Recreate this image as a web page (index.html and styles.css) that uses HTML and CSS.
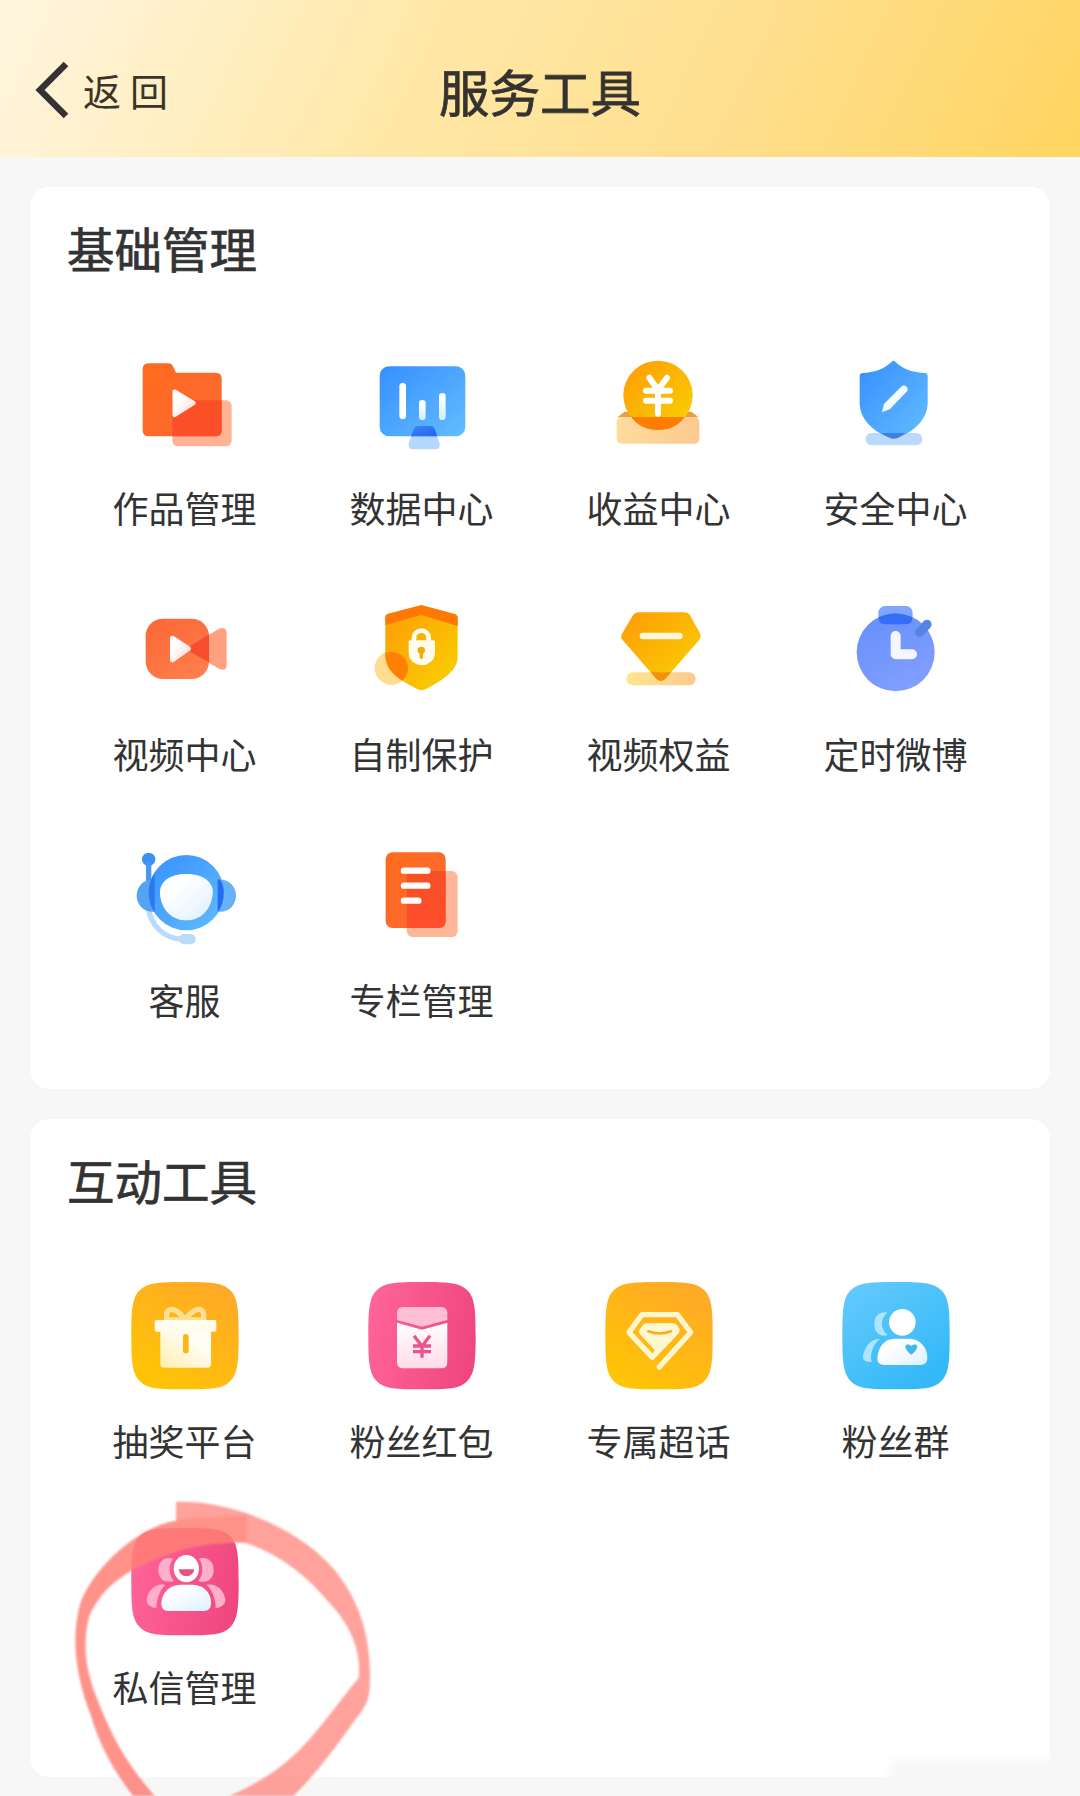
FILE: index.html
```html
<!DOCTYPE html>
<html lang="zh-CN">
<head>
<meta charset="UTF-8">
<meta name="viewport" content="width=device-width, initial-scale=1.0">
<title>服务工具</title>
<link rel="stylesheet" href="styles.css">
</head>
<body>

<!-- shared gradients -->
<svg class="defs" width="0" height="0">
  <defs>
    <linearGradient id="orange" x1="0" y1="0" x2="1" y2="1"><stop offset="0" stop-color="#ff6a1c"/><stop offset="1" stop-color="#fb6a35"/></linearGradient>
    <linearGradient id="coral" x1="0" y1="0" x2="0.6" y2="1"><stop offset="0" stop-color="#fb6634"/><stop offset="1" stop-color="#ff7c4c"/></linearGradient>
    <linearGradient id="red" x1="0.5" y1="0" x2="0.5" y2="1"><stop offset="0" stop-color="#f84f25"/><stop offset="1" stop-color="#ff4f2c"/></linearGradient>
    <linearGradient id="blue" x1="0" y1="0" x2="1" y2="1"><stop offset="0" stop-color="#3590ff"/><stop offset="1" stop-color="#64bcfe"/></linearGradient>
    <linearGradient id="deep" x1="0" y1="0" x2="1" y2="1"><stop offset="0" stop-color="#3a86f4"/><stop offset="1" stop-color="#2464ef"/></linearGradient>
    <linearGradient id="gold" x1="0" y1="0" x2="1" y2="1"><stop offset="0" stop-color="#ff9a08"/><stop offset="1" stop-color="#f8d300"/></linearGradient>
    <linearGradient id="peach" x1="0" y1="0" x2="1" y2="0"><stop offset="0" stop-color="#fedc9c"/><stop offset="1" stop-color="#fdc890"/></linearGradient>
    <linearGradient id="lemon" x1="0" y1="0" x2="1" y2="0"><stop offset="0" stop-color="#ffe78c"/><stop offset="1" stop-color="#fdc890"/></linearGradient>
    <linearGradient id="indigo" x1="0.2" y1="0" x2="0.7" y2="1"><stop offset="0" stop-color="#6690f9"/><stop offset="1" stop-color="#829fff"/></linearGradient>
    <linearGradient id="fadeRed" x1="0" y1="0" x2="1" y2="1"><stop offset="0.3" stop-color="#fff"/><stop offset="1" stop-color="#ffd9d2"/></linearGradient>
    <linearGradient id="fadeBlue" x1="0" y1="0" x2="1" y2="1"><stop offset="0.3" stop-color="#fff"/><stop offset="1" stop-color="#dcf0fe"/></linearGradient>
    <linearGradient id="bar" x1="0" y1="0" x2="0" y2="1"><stop offset="0.2" stop-color="#fff"/><stop offset="1" stop-color="#c9f0ff"/></linearGradient>
    <linearGradient id="tileGold" x1="0.8" y1="0" x2="0.2" y2="1"><stop offset="0" stop-color="#ffa928"/><stop offset="1" stop-color="#ffc504"/></linearGradient>
    <linearGradient id="tilePink" x1="0" y1="0.4" x2="1" y2="0.6"><stop offset="0" stop-color="#ff6398"/><stop offset="1" stop-color="#ee477e"/></linearGradient>
    <linearGradient id="tileBlue" x1="0" y1="0" x2="0.7" y2="1"><stop offset="0" stop-color="#66cbfd"/><stop offset="1" stop-color="#33b8f8"/></linearGradient>
    <linearGradient id="cream" x1="0" y1="1" x2="1" y2="0"><stop offset="0" stop-color="#ffeeb0"/><stop offset="0.7" stop-color="#fffdf4"/></linearGradient>
    <linearGradient id="blush" x1="0" y1="0" x2="0" y2="1"><stop offset="0" stop-color="#fff"/><stop offset="1" stop-color="#ffdbe7"/></linearGradient>
    <path id="tile" d="M180 12C258 12 293 14 316 37C339 60 341 97 341 173C341 249 339 285 316 309C293 333 258 334 180 334C102 334 67 333 44 309C21 285 19 249 19 173C19 97 21 60 44 37C67 14 102 12 180 12Z"/>
  </defs>
</svg>

<header class="header">
  <a class="back">
    <svg class="back-arrow" viewBox="0 0 34 58"><path d="M31 3L5 29L31 55"/></svg>
    <span>返回</span>
  </a>
  <h1>服务工具</h1>
</header>

<main class="content">
  <section class="card">
    <h2>基础管理</h2>
    <div class="grid">
      <div class="item">
        <svg class="icon" viewBox="76 11 360 360">
          <rect x="218" y="180" width="178" height="138" rx="17" fill="#ffb294"/>
          <path d="M147 69H207Q216 69 220 78L229 97H348Q366 97 366 115V270Q366 288 348 288H147Q129 288 129 270V87Q129 69 147 69Z" fill="url(#orange)"/>
          <path d="M218 197Q218 180 235 180H366V270Q366 288 348 288H218Z" fill="url(#red)"/>
          <path d="M225 154L282 188L225 224Z" fill="url(#fadeRed)" stroke="url(#fadeRed)" stroke-width="13" stroke-linejoin="round"/>
        </svg>
        <span>作品管理</span>
      </div>
      <div class="item">
        <svg class="icon" viewBox="787 11 360 360">
          <path d="M941 270Q945 257 957 257H993Q1003 257 1007 270L1020 310Q1022 327 1007 327H941Q925 327 927 310Z" fill="#b5d8ff"/>
          <rect x="840" y="78" width="257" height="210" rx="28" fill="url(#blue)"/>
          <path d="M941 270Q945 257 957 257H993Q1003 257 1007 270L1013 288H934Z" fill="url(#deep)"/>
          <rect x="899" y="128" width="20" height="108" rx="10" fill="#fff"/>
          <rect x="958" y="179" width="20" height="60" rx="10" fill="url(#bar)"/>
          <rect x="1018" y="158" width="20" height="81" rx="10" fill="url(#bar)"/>
        </svg>
        <span>数据中心</span>
      </div>
      <div class="item">
        <svg class="icon" viewBox="58 11 360 360">
          <path d="M113 231L135 214H335L357 231Z" fill="#e99e42"/>
          <rect x="111" y="230" width="248" height="80" rx="15" fill="url(#peach)"/>
          <circle cx="235" cy="165" r="104" fill="url(#gold)"/>
          <path d="M155 230H315C297 256 268 269 235 269C202 269 173 256 155 230Z" fill="#ff7d05"/>
          <path d="M209 112L235 149L262 112M199 151H271M199 181H271M235 149V220" fill="none" stroke="#fff" stroke-width="18" stroke-linecap="round"/>
        </svg>
        <span>收益中心</span>
      </div>
      <div class="item">
        <svg class="icon" viewBox="769 11 360 360">
          <rect x="858" y="278" width="170" height="37" rx="18" fill="#bbd9fd"/>
          <path d="M936 64Q941 59 947 64C968 86 1001 96 1036 98Q1044 99 1044 106V187C1044 230 1012 270 955 292Q941 297 930 292C872 270 840 230 840 187V106Q840 99 848 98C883 96 914 86 936 64Z" fill="url(#blue)"/>
          <path d="M905 278H978Q966 287 955 292Q941 297 930 292Q917 287 905 278Z" fill="#3c82e5"/>
          <path d="M966 138Q973 132 981 139Q987 147 981 154L931 206L907 216L913 191Z" fill="url(#fadeBlue)"/>
        </svg>
        <span>安全中心</span>
      </div>

      <div class="item">
        <svg class="icon" viewBox="76 29 360 360">
          <path d="M272 197L358 145Q381 138 381 160V253Q381 272 361 267L272 215Z" fill="#ffa07f"/>
          <rect x="138" y="115" width="190" height="181" rx="52" fill="url(#coral)"/>
          <path d="M272 197L328 162V246L272 215Z" fill="#f84c2e"/>
          <path d="M218 173L267 205L218 239Z" fill="url(#fadeRed)" stroke="url(#fadeRed)" stroke-width="14" stroke-linejoin="round"/>
        </svg>
        <span>视频中心</span>
      </div>
      <div class="item">
        <svg class="icon" viewBox="786 29 360 360">
          <circle cx="874" cy="263" r="50" fill="#ffdc91"/>
          <path d="M865 100L957 76Q964 73 971 76L1064 101Q1073 104 1073 112V230C1073 266 1040 294 978 326Q964 333 951 326C888 294 856 266 856 230V110Q856 103 865 100Z" fill="url(#gold)"/>
          <path d="M865 100L957 76Q964 73 971 76L1064 101Q1073 104 1073 112V137L964 104L856 134V110Q856 103 865 100Z" fill="#ff7806"/>
          <path d="M856 217C890 206 924 230 924 263Q924 285 906 301C875 280 856 257 856 217Z" fill="#ff8004"/>
          <path d="M942 184V171A22 20 0 0 1 986 171V184" fill="none" stroke="#fffdf0" stroke-width="14"/>
          <path d="M926 184Q926 180 931 180H1000Q1005 180 1005 184V217A39 37 0 0 1 926 217Z" fill="#fffbed"/>
          <circle cx="964" cy="210" r="11" fill="#f4aa09"/><rect x="959" y="212" width="10" height="24" rx="5" fill="#f4aa09"/>
        </svg>
        <span>自制保护</span>
      </div>
      <div class="item">
        <svg class="icon" viewBox="58 29 360 360">
          <rect x="140" y="276" width="208" height="39" rx="19" fill="url(#lemon)"/>
          <path d="M178 96H314Q325 96 331 105L361 159Q366 168 359 178L260 292Q244 312 227 292L129 179Q121 170 128 159L160 105Q166 96 178 96Z" fill="url(#gold)"/>
          <path d="M213 276H274L260 292Q244 312 227 292Z" fill="#f39109"/>
          <rect x="180" y="157" width="129" height="20" rx="10" fill="#fff6dc"/>
        </svg>
        <span>视频权益</span>
      </div>
      <div class="item">
        <svg class="icon" viewBox="769 29 360 360">
          <rect x="896" y="77" width="103" height="55" rx="20" fill="#7ea6fd"/>
          <circle cx="948" cy="216" r="117" fill="url(#indigo)"/>
          <path d="M897 111Q948 88 998 111Q999 132 979 132H916Q896 132 897 111Z" fill="#356df6"/>
          <path d="M1020 156L1042 132" stroke="#5484e6" stroke-width="28" stroke-linecap="round"/>
          <path d="M948 167V222H997" fill="none" stroke="#f4f7ff" stroke-width="30" stroke-linecap="round" stroke-linejoin="round"/>
        </svg>
        <span>定时微博</span>
      </div>

      <div class="item">
        <svg class="icon" viewBox="76 17 360 360">
          <path d="M147 235C153 288 197 325 247 327" fill="none" stroke="#b9dafb" stroke-width="16"/>
          <rect x="238" y="311" width="50" height="31" rx="15" fill="#b9dafb"/>
          <circle cx="147" cy="87" r="20" fill="#3a91f4"/>
          <path d="M147 95V165" stroke="#4798f4" stroke-width="16"/>
          <path d="M165 148V244C133 247 111 223 111 196C111 169 133 145 165 148Z" fill="#54a3f5"/>
          <path d="M354 148C387 145 409 169 409 196C409 223 387 248 354 244Z" fill="#65b1fa"/>
          <circle cx="260" cy="187" r="113" fill="url(#blue)"/>
          <path d="M165 126V248C141 209 141 165 165 126Z" fill="#2b78ef"/>
          <path d="M354 147C363 144 369 161 372 178C374 205 366 231 354 245Z" fill="#256cf1"/>
          <path d="M181 193C177 153 213 131 260 131C307 131 344 153 339 193C333 240 302 270 260 270C218 270 186 240 181 193Z" fill="url(#fadeBlue)"/>
        </svg>
        <span>客服</span>
      </div>
      <div class="item">
        <svg class="icon" viewBox="787 17 360 360">
          <rect x="921" y="122" width="153" height="198" rx="19" fill="#ffb799"/>
          <rect x="858" y="66" width="180" height="227" rx="20" fill="url(#orange)"/>
          <path d="M921 141Q921 122 940 122H1038V273Q1038 293 1018 293H921Z" fill="url(#red)"/>
          <path d="M913 121H983M913 166H983M913 211H956" stroke="#fff" stroke-width="19" stroke-linecap="round"/>
        </svg>
        <span>专栏管理</span>
      </div>
    </div>
  </section>

  <section class="card card-tiles">
    <h2>互动工具</h2>
    <div class="grid">
      <div class="item">
        <svg class="icon" viewBox="0 0 360 360">
          <use href="#tile" fill="url(#tileGold)"/>
          <path d="M180 126C160 94 132 84 125 106V126H236V106C229 84 201 94 180 126Z" fill="none" stroke="#ffdf91" stroke-width="16" stroke-linejoin="round"/>
          <path d="M106 158H258V257Q258 269 246 269H118Q106 269 106 257Z" fill="url(#cream)"/>
          <rect x="89" y="126" width="185" height="35" rx="5" fill="#fffbed"/>
          <rect x="174" y="168" width="17" height="58" rx="8" fill="#ffb515"/>
        </svg>
        <span>抽奖平台</span>
      </div>
      <div class="item">
        <svg class="icon" viewBox="0 0 360 360">
          <use href="#tile" fill="url(#tilePink)"/>
          <path d="M105 105Q105 87 123 87H238Q256 87 256 105V126L180 146L105 126Z" fill="#ffbed3"/>
          <path d="M105 134L180 155L256 134V252Q256 271 238 271H123Q105 271 105 252Z" fill="url(#blush)"/>
          <path d="M156 173L180 205L204 173M153 204H207M153 221H207M180 203V239" fill="none" stroke="#e9568b" stroke-width="10"/>
        </svg>
        <span>粉丝红包</span>
      </div>
      <div class="item">
        <svg class="icon" viewBox="0 0 360 360">
          <use href="#tile" fill="url(#tileGold)"/>
          <path d="M160 238L90 163L129 110H235L275 163L181 267" fill="none" stroke="#fff6cf" stroke-width="16" stroke-linejoin="round" stroke-linecap="round"/>
          <path d="M141 136H223Q231 136 236 143L242 153Q243 162 237 169L166 243L155 233L167 217L123 169Q117 162 123 153L130 143Q134 136 141 136Z" fill="#fff7cf"/>
          <path d="M148 160Q182 173 216 160" fill="none" stroke="#f5ae20" stroke-width="8" stroke-linecap="round"/>
        </svg>
        <span>专属超话</span>
      </div>
      <div class="item">
        <svg class="icon" viewBox="0 0 360 360">
          <use href="#tile" fill="url(#tileBlue)"/>
          <path d="M154 104C131 123 133 153 155 171C132 178 115 163 115 137C115 112 134 99 154 104Z" fill="#afe4ff"/>
          <path d="M132 183C112 198 100 227 107 252C88 252 80 248 81 234C85 206 107 180 132 183Z" fill="#afe4ff"/>
          <circle cx="199" cy="133" r="40" fill="#fff"/>
          <path d="M176 182H219C253 182 275 210 274 240Q274 261 253 261H145Q123 261 124 240C127 209 143 182 176 182Z" fill="url(#fadeBlue)"/>
          <path d="M226 230C197 208 208 191 226 204C244 191 255 208 226 230Z" fill="#41b6ef"/>
        </svg>
        <span>粉丝群</span>
      </div>

      <div class="item">
        <svg class="icon" viewBox="0 0 360 360">
          <use href="#tile" fill="url(#tilePink)"/>
          <path id="wing" d="M144 104C130 122 131 151 146 171C119 180 100 164 100 138C100 111 120 97 144 104ZM121 182C103 200 94 227 94 253C76 250 64 242 65 226C70 199 89 178 121 182Z" fill="#ffafc9"/>
          <use href="#wing" transform="translate(366 0) scale(-1 1)"/>
          <ellipse cx="184" cy="134" rx="38" ry="41" fill="#fff"/>
          <path d="M161 136H208Q205 156 184 157Q164 156 161 136Z" fill="#e8527f"/>
          <path d="M167 182H203C237 182 259 207 258 237Q258 261 236 261H132Q109 261 109 239C110 207 133 182 167 182Z" fill="url(#fadeBlue)"/>
        </svg>
        <span>私信管理</span>
      </div>
    </div>
  </section>
</main>

<!-- marker circle drawn over the last item -->
<svg class="marker" viewBox="0 0 1020 948">
  <path class="stroke-light" d="M378 66C450 63 522 78 590 100C710 142 820 213 882 308C935 390 966 485 959 625C957 665 940 690 915 720C845 820 785 895 730 948H535C620 915 693 864 748 811C812 744 862 672 926 593C935 510 899 431 833 363C765 282 677 213 560 181L378 143Z"/>
  <path d="M555 188C440 191 352 215 242 274C180 312 144 350 118 408C98 485 103 560 141 655C181 760 223 842 314 948H249C193 875 150 800 122 705C77 590 61 470 92 367C128 268 260 140 383 121C450 106 530 112 590 105L590 188Z"/>
</svg>
<div class="smudge"></div>

</body>
</html>
```
FILE: styles.css
```css
* {
  box-sizing: border-box;
}
body {
  position: relative;
  height: 1796px;
  margin: 0;
  overflow: hidden;
  background-color: #f7f7f7;
  color: #333;
  font-family: "Noto Sans CJK SC", sans-serif;
}
h1, h2 {
  margin: 0;
  font-weight: 400;
}
.defs {
  position: absolute;
}
.header {
  display: grid;
  grid-template-columns: 1fr auto 1fr;
  align-items: center;
  height: 157px;
  padding: 22px 35px 0;
  background: linear-gradient(115deg, #fff6e0 0%, #ffe8a8 38%, #ffdf8e 68%, #ffd460 100%);
}
.header h1 {
  font-size: 50.5px;
  line-height: 70px;
  -webkit-text-stroke: 0.8px #38342a;
}
.back {
  display: flex;
  align-items: center;
  gap: 14px;
  color: #3b3528;
  font-size: 38px;
  line-height: 50px;
  letter-spacing: 9px;
}
.back-arrow {
  width: 34px;
  height: 58px;
  fill: none;
  stroke: #333;
  stroke-width: 6.5;
}
.content {
  display: flex;
  flex-direction: column;
  gap: 30px;
  padding: 30px;
}
.card {
  height: 902px;
  padding: 30px 37px 0;
  background-color: #fff;
  border-radius: 20px;
}
.card h2 {
  font-size: 47.5px;
  line-height: 62px;
  -webkit-text-stroke: 0.7px #333;
}
.grid {
  display: grid;
  grid-template-columns: repeat(4, 237px);
  grid-auto-rows: 246px;
  margin: 65px -1px 0;
}
.card-tiles {
  height: 658px;
}
.card-tiles .grid {
  margin-top: 67px;
}
.item {
  display: flex;
  flex-direction: column;
  align-items: center;
  gap: 18px;
  font-size: 36px;
  line-height: 50px;
}
.card-tiles .item {
  gap: 17px;
}
.icon {
  width: 120px;
  height: 120px;
}
.marker {
  position: absolute;
  top: 1480px;
  left: 50px;
  width: 340px;
  height: 316px;
  fill: #ff7f75;
  opacity: 0.85;
  filter: blur(1.2px);
}
.stroke-light {
  fill-opacity: 0.85;
}
.smudge {
  position: absolute;
  right: 10px;
  bottom: 12px;
  width: 180px;
  height: 24px;
  background: #f7f7f7;
  filter: blur(5px);
}
```
